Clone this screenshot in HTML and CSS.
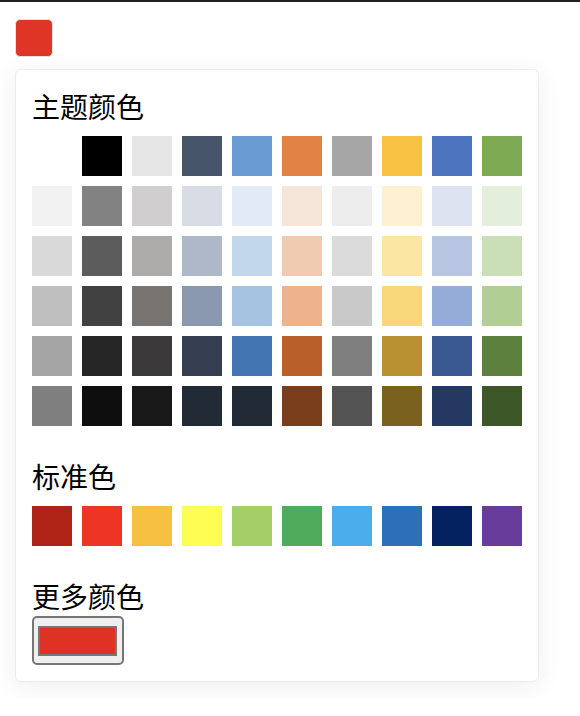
FILE: index.html
```html
<!DOCTYPE html>
<html lang="zh-CN">
<head>
<meta charset="utf-8">
<title>颜色选择</title>
<link rel="stylesheet" href="styles.css">
</head>
<body>
<div class="page">
  <div class="trigger"></div>
  <div class="panel">
    <div class="title first">主题颜色</div>
    <div class="grid">
      <span class="sw" style="background:#ffffff"></span>
      <span class="sw" style="background:#000000"></span>
      <span class="sw" style="background:#e6e6e6"></span>
      <span class="sw" style="background:#47556a"></span>
      <span class="sw" style="background:#6a9bd2"></span>
      <span class="sw" style="background:#e18344"></span>
      <span class="sw" style="background:#a6a6a6"></span>
      <span class="sw" style="background:#f7c143"></span>
      <span class="sw" style="background:#4d74bf"></span>
      <span class="sw" style="background:#7eaa54"></span>

      <span class="sw" style="background:#f2f2f2"></span>
      <span class="sw" style="background:#828282"></span>
      <span class="sw" style="background:#d0cecf"></span>
      <span class="sw" style="background:#d7dce5"></span>
      <span class="sw" style="background:#e1eaf5"></span>
      <span class="sw" style="background:#f6e5d9"></span>
      <span class="sw" style="background:#ededed"></span>
      <span class="sw" style="background:#fdf1d2"></span>
      <span class="sw" style="background:#dde3f0"></span>
      <span class="sw" style="background:#e4efdb"></span>

      <span class="sw" style="background:#d9d9d9"></span>
      <span class="sw" style="background:#5c5c5c"></span>
      <span class="sw" style="background:#adacab"></span>
      <span class="sw" style="background:#afb8c8"></span>
      <span class="sw" style="background:#c3d7ec"></span>
      <span class="sw" style="background:#f0cbb1"></span>
      <span class="sw" style="background:#dbdbdb"></span>
      <span class="sw" style="background:#fbe6a3"></span>
      <span class="sw" style="background:#b8c6e4"></span>
      <span class="sw" style="background:#cadfb8"></span>

      <span class="sw" style="background:#bfbfbf"></span>
      <span class="sw" style="background:#414141"></span>
      <span class="sw" style="background:#787472"></span>
      <span class="sw" style="background:#8a98b0"></span>
      <span class="sw" style="background:#a6c3e2"></span>
      <span class="sw" style="background:#ecb38c"></span>
      <span class="sw" style="background:#c9c9c9"></span>
      <span class="sw" style="background:#f9d87a"></span>
      <span class="sw" style="background:#95abd8"></span>
      <span class="sw" style="background:#b1ce95"></span>

      <span class="sw" style="background:#a5a5a5"></span>
      <span class="sw" style="background:#262626"></span>
      <span class="sw" style="background:#3c393a"></span>
      <span class="sw" style="background:#353f51"></span>
      <span class="sw" style="background:#4275b2"></span>
      <span class="sw" style="background:#b95f2a"></span>
      <span class="sw" style="background:#7f7f7f"></span>
      <span class="sw" style="background:#b99132"></span>
      <span class="sw" style="background:#3a5892"></span>
      <span class="sw" style="background:#5d803c"></span>

      <span class="sw" style="background:#7f7f7f"></span>
      <span class="sw" style="background:#0e0e0e"></span>
      <span class="sw" style="background:#181818"></span>
      <span class="sw" style="background:#222a35"></span>
      <span class="sw" style="background:#222a35"></span>
      <span class="sw" style="background:#7a3f1a"></span>
      <span class="sw" style="background:#545454"></span>
      <span class="sw" style="background:#7a611f"></span>
      <span class="sw" style="background:#243862"></span>
      <span class="sw" style="background:#3e5729"></span>
    </div>

    <div class="title">标准色</div>
    <div class="grid">
      <span class="sw" style="background:#b02418"></span>
      <span class="sw" style="background:#ee3424"></span>
      <span class="sw" style="background:#f6c143"></span>
      <span class="sw" style="background:#fefd54"></span>
      <span class="sw" style="background:#a4ce67"></span>
      <span class="sw" style="background:#50ac5c"></span>
      <span class="sw" style="background:#4baeea"></span>
      <span class="sw" style="background:#2d70b8"></span>
      <span class="sw" style="background:#052260"></span>
      <span class="sw" style="background:#683c9b"></span>
    </div>

    <div class="title more">更多颜色</div>
    <div class="picker"><span class="picker-fill"></span></div>
  </div>
</div>
</body>
</html>
```

FILE: styles.css
```css
html, body {
  margin: 0;
  padding: 0;
  background: #ffffff;
}

body {
  font-family: "Noto Sans CJK SC", "Noto Sans", sans-serif;
  color: #000000;
}

.page {
  border-top: 2px solid #222222;
  padding: 17px 15px;
}

.trigger {
  width: 38px;
  height: 38px;
  box-sizing: border-box;
  border: 1px solid #e2e2e2;
  border-radius: 5px;
  background: #de3527;
}

.panel {
  margin-top: 12px;
  width: 524px;
  box-sizing: border-box;
  border: 1px solid #ebebf3;
  border-radius: 6px;
  padding: 16px;
  background: #ffffff;
  box-shadow: 0 4px 24px 0 rgba(40, 40, 80, 0.08);
}

.title {
  font-size: 28px;
  line-height: 40px;
  height: 40px;
  margin-top: 30px;
  margin-bottom: 10px;
}

.title.first {
  margin-top: 0;
}

.title.more {
  margin-bottom: 0;
}

.grid {
  display: grid;
  grid-template-columns: repeat(10, 40px);
  grid-auto-rows: 40px;
  gap: 10px;
}

.sw {
  display: block;
  width: 40px;
  height: 40px;
}

.picker {
  width: 92px;
  height: 49px;
  box-sizing: border-box;
  border: 2px solid #767676;
  border-radius: 5px;
  background: #efefef;
  display: flex;
  align-items: center;
  padding-left: 4px;
}

.picker-fill {
  display: block;
  width: 79px;
  height: 30px;
  box-sizing: border-box;
  border: 2px solid #767676;
  background: #de3324;
}
```
